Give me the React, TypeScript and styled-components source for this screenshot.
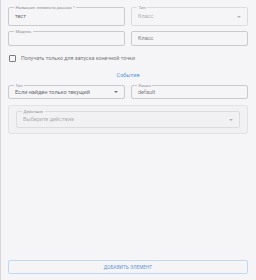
import React from "react";
import styled, { createGlobalStyle } from "styled-components";

const Global = createGlobalStyle`
  html, body { margin: 0; padding: 0; background: #f5f5f7; }
  body { font-family: Roboto, "Liberation Sans", Arial, sans-serif; }
`;

const Page = styled.div`
  box-sizing: border-box;
  width: 256px;
  height: 280px;
  border-left: 1px solid #d6d6d8;
  padding: 7px 8px 6px 7px;
  display: flex;
  flex-direction: column;
`;

const Row = styled.div<{ $mt?: number }>`
  display: grid;
  grid-template-columns: 1fr 1fr;
  gap: 6px;
  margin-top: ${(p) => p.$mt ?? 0}px;
`;

const Field = styled.div<{ $h: number; $disabled?: boolean }>`
  position: relative;
  box-sizing: border-box;
  height: ${(p) => p.$h}px;
  border: 1px solid ${(p) => (p.$disabled ? "#dcdcde" : "#cacacd")};
  border-radius: 2px;
  display: flex;
  align-items: center;
  padding: 0 6px;
`;

const Label = styled.span<{ $bg?: string }>`
  position: absolute;
  top: -3px;
  left: 5px;
  padding: 0 1.5px;
  font-size: 4.3px;
  line-height: 5px;
  color: #919195;
  background: ${(p) => p.$bg ?? "#f5f5f7"};
  white-space: nowrap;
`;

const Value = styled.span<{ $tone?: "dark" | "mid" | "light" }>`
  flex: 1;
  font-size: 5.5px;
  line-height: 7px;
  color: ${(p) =>
    p.$tone === "light" ? "#b0b0b4" : p.$tone === "mid" ? "#808084" : "#6a6a6e"};
  white-space: nowrap;
`;

const Arrow = styled.span<{ $light?: boolean }>`
  width: 0;
  height: 0;
  border-left: 2px solid transparent;
  border-right: 2px solid transparent;
  border-top: 2px solid ${(p) => (p.$light ? "#b4b4b8" : "#707074")};
`;

const CheckRow = styled.label`
  display: flex;
  align-items: center;
  gap: 5px;
  margin-top: 9px;
  margin-left: 1px;
`;

const Box = styled.span`
  box-sizing: border-box;
  width: 7px;
  height: 7px;
  border: 1px solid #7c7c80;
  border-radius: 1px;
`;

const CheckText = styled.span`
  font-size: 5.3px;
  line-height: 7px;
  color: #78787c;
`;

const SectionTitle = styled.div`
  margin-top: 10px;
  text-align: center;
  font-size: 5.5px;
  line-height: 7px;
  color: #4f93da;
`;

const ActionCard = styled.div`
  box-sizing: border-box;
  margin-top: 6px;
  border: 1px solid #e2e2e5;
  border-radius: 3px;
  background: #f1f1f3;
  padding: 5px 7px 5px 7px;
  height: 29px;
`;

const Spacer = styled.div`
  flex: 1;
`;

const AddButton = styled.button`
  box-sizing: border-box;
  height: 14px;
  width: 100%;
  border: 1px solid #c0d8f2;
  border-radius: 2px;
  background: #f5f5f7;
  color: #6394d3;
  font-family: Roboto, "Liberation Sans", Arial, sans-serif;
  font-size: 4.6px;
  letter-spacing: 0.1px;
  padding: 0;
`;

export default function App() {
  return (
    <>
      <Global />
      <Page>
        <Row $mt={0}>
          <Field $h={19}>
            <Label>Название элемента данных *</Label>
            <Value>тест</Value>
          </Field>
          <Field $h={19} $disabled>
            <Label>Тип</Label>
            <Value $tone="light">Класс</Value>
            <Arrow $light />
          </Field>
        </Row>
        <Row $mt={5}>
          <Field $h={15}>
            <Label>Модель</Label>
            <Value />
          </Field>
          <Field $h={15}>
            <Value $tone="mid">Класс</Value>
          </Field>
        </Row>
        <CheckRow>
          <Box />
          <CheckText>Получать только для запуска конечной точки</CheckText>
        </CheckRow>
        <SectionTitle>События</SectionTitle>
        <Row $mt={6}>
          <Field $h={14}>
            <Label>Тип</Label>
            <Value>Если найден только текущий</Value>
            <Arrow />
          </Field>
          <Field $h={14}>
            <Label>Канал</Label>
            <Value $tone="mid">default</Value>
          </Field>
        </Row>
        <ActionCard>
          <Field $h={17} $disabled>
            <Label $bg="#f1f1f3">Действие</Label>
            <Value $tone="light">Выберите действие</Value>
            <Arrow $light />
          </Field>
        </ActionCard>
        <Spacer />
        <AddButton>ДОБАВИТЬ ЭЛЕМЕНТ</AddButton>
      </Page>
    </>
  );
}
